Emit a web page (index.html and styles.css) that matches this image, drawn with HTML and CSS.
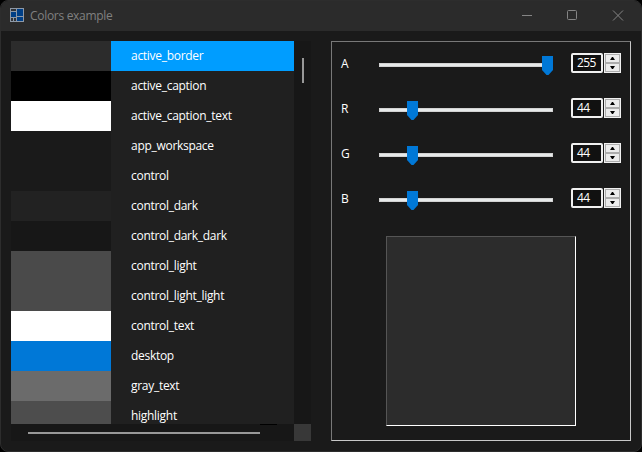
FILE: index.html
```html
<!DOCTYPE html>
<html lang="en">
<head>
<meta charset="utf-8">
<title>Colors example</title>
<link rel="stylesheet" href="styles.css">
</head>
<body>
<div class="window">
  <header class="titlebar">
    <svg class="app-icon" width="14" height="14" viewBox="0 0 14 14" shape-rendering="crispEdges">
      <rect width="14" height="14" fill="#8d98a6"/>
      <rect x="1" y="1" width="5" height="2" fill="#303338"/>
      <rect x="7" y="1" width="6" height="7" fill="#003f86"/>
      <rect x="1" y="4" width="5" height="5" fill="#003f86"/>
      <rect x="1" y="10" width="2" height="3" fill="#303338"/>
      <rect x="4" y="10" width="2" height="3" fill="#303338"/>
      <rect x="7" y="9" width="6" height="4" fill="#003f86"/>
    </svg>
    <h1 class="title"><span>Colors example</span></h1>
    <svg class="controls" width="120" height="30" viewBox="0 0 120 30" fill="none" stroke="#858585">
      <path d="M10 15.5h10"/>
      <rect x="55.5" y="10.5" width="9" height="9" rx="1"/>
      <path d="M101 10.5l10 10M111 10.5l-10 10"/>
    </svg>
  </header>
  <main class="content">
    <section class="list-view">
      <ul class="list">
        <li class="row selected"><i class="swatch c-2c"></i><span>active_border</span></li>
        <li class="row"><i class="swatch c-black"></i><span>active_caption</span></li>
        <li class="row"><i class="swatch c-white"></i><span>active_caption_text</span></li>
        <li class="row"><i class="swatch c-1a"></i><span>app_workspace</span></li>
        <li class="row"><i class="swatch c-1a"></i><span>control</span></li>
        <li class="row"><i class="swatch c-22"></i><span>control_dark</span></li>
        <li class="row"><i class="swatch c-17"></i><span>control_dark_dark</span></li>
        <li class="row"><i class="swatch c-4a"></i><span>control_light</span></li>
        <li class="row"><i class="swatch c-4a"></i><span>control_light_light</span></li>
        <li class="row"><i class="swatch c-white"></i><span>control_text</span></li>
        <li class="row"><i class="swatch c-blue"></i><span>desktop</span></li>
        <li class="row"><i class="swatch c-6b"></i><span>gray_text</span></li>
        <li class="row"><i class="swatch c-4d"></i><span>highlight</span></li>
      </ul>
      <div class="vscroll"><div class="vthumb"></div></div>
      <div class="hscroll"><div class="hthumb"></div><div class="mark"></div></div>
      <div class="corner"></div>
    </section>
    <section class="panel">
      <div class="channel">
        <label>A</label>
        <div class="slider"><svg class="thumb max" width="11" height="19"><path d="M0 0h11v14l-4.500 5h-2l-4.500-5z"/></svg></div>
        <div class="number">255</div>
        <div class="spin"><b class="up"></b><b class="down"></b></div>
      </div>
      <div class="channel">
        <label>R</label>
        <div class="slider"><svg class="thumb" width="11" height="19"><path d="M0 0h11v14l-4.500 5h-2l-4.500-5z"/></svg></div>
        <div class="number">44</div>
        <div class="spin"><b class="up"></b><b class="down"></b></div>
      </div>
      <div class="channel">
        <label>G</label>
        <div class="slider"><svg class="thumb" width="11" height="19"><path d="M0 0h11v14l-4.500 5h-2l-4.500-5z"/></svg></div>
        <div class="number">44</div>
        <div class="spin"><b class="up"></b><b class="down"></b></div>
      </div>
      <div class="channel">
        <label>B</label>
        <div class="slider"><svg class="thumb" width="11" height="19"><path d="M0 0h11v14l-4.500 5h-2l-4.500-5z"/></svg></div>
        <div class="number">44</div>
        <div class="spin"><b class="up"></b><b class="down"></b></div>
      </div>
      <div class="preview"></div>
    </section>
  </main>
</div>
</body>
</html>
```
FILE: styles.css
```css
* {
  box-sizing: border-box;
}

body {
  margin: 0;
  overflow: hidden;
  background: #000;
  color: #fff;
  font: 12px/30px "Open Sans", "Noto Sans", sans-serif;
  letter-spacing: -0.29px;
}

.window {
  width: 642px;
  height: 452px;
  border: 1px solid #2d2d2d;
  border-radius: 8px;
  background: #1a1a1a;
  overflow: hidden;
}

.titlebar {
  display: flex;
  align-items: center;
  height: 30px;
  padding-left: 9px;
  background: #2b2b2b;
}

.app-icon {
  margin-bottom: 2px;
}

.title {
  flex: 1;
  margin: 0 0 0 6px;
  color: #808080;
  font-size: 12px;
  font-weight: 400;
  letter-spacing: -0.3px;
}

.controls {
  flex: none;
  margin: -2px 9px 0 0;
}

.content {
  display: flex;
  gap: 20px;
  padding: 10px;
}

.list-view {
  display: grid;
  grid-template: 383px 17px / 283px 17px;
  background: #171717;
}

.list {
  margin: 0;
  padding: 0;
  overflow: hidden;
  background: #202020;
  list-style: none;
}

.row {
  display: flex;
  gap: 20px;
  height: 30px;
}

.selected {
  background: #009dff;
}

.swatch {
  width: 100px;
}

.c-2c { background: #2c2c2c; }
.c-black { background: #000; }
.c-white { background: #fff; }
.c-1a { background: #1a1a1a; }
.c-22 { background: #222; }
.c-17 { background: #171717; }
.c-4a { background: #4a4a4a; }
.c-blue { background: #0078d7; }
.c-6b { background: #6b6b6b; }
.c-4d { background: #4d4d4d; }

.vscroll {
  padding: 17px 7px 0 8px;
}

.vthumb {
  height: 25px;
  background: #989898;
}

.hscroll {
  display: flex;
  padding-left: 17px;
}

.hthumb {
  width: 232px;
  height: 2px;
  margin-top: 8px;
  background: #989898;
}

.mark {
  width: 17px;
  height: 1px;
  background: #000;
}

.corner {
  background: #383838;
}

.panel {
  width: 300px;
  height: 400px;
  padding: 11px 9px 0;
  border: 1px solid;
  border-color: #787878 #c8c8c8 #c8c8c8 #787878;
}

.channel {
  display: grid;
  grid-template-columns: 38px 174px 18px 32px 1px 17px;
  height: 45px;
}

.channel label {
  line-height: 22px;
}

.slider {
  height: 4px;
  margin-top: 10px;
  border: 1px solid #d2d2d2;
  background: #e7eaea;
}

.thumb {
  display: block;
  margin: -8px 0 0 27px;
  fill: #0078d7;
}

.thumb.max {
  margin-left: 162px;
}

.number {
  grid-column: 4;
  height: 20px;
  padding-left: 4px;
  border: 2px solid #f0f0f0;
  border-radius: 2px;
  background: #111;
  letter-spacing: -0.6px;
  line-height: 16px;
}

.spin {
  grid-column: 6;
  display: grid;
  grid-template-rows: 9px 9px;
  height: 20px;
  padding: 1px;
  background: #f0f0f0;
}

.spin b {
  display: flex;
  align-items: center;
  justify-content: center;
  border: 1px solid #adadad;
  background: #ececec;
}

.spin b::before {
  content: "";
  width: 5px;
  height: 3px;
  background: #000;
}

.up::before {
  clip-path: polygon(40% 0, 60% 0, 100% 100%, 0 100%);
}

.down::before {
  clip-path: polygon(0 0, 100% 0, 60% 100%, 40% 100%);
}

.preview {
  width: 190px;
  height: 190px;
  margin: 3px 0 0 45px;
  border: 1px solid;
  border-color: #555 #fff #fff #555;
  background: #2c2c2c;
}
```
